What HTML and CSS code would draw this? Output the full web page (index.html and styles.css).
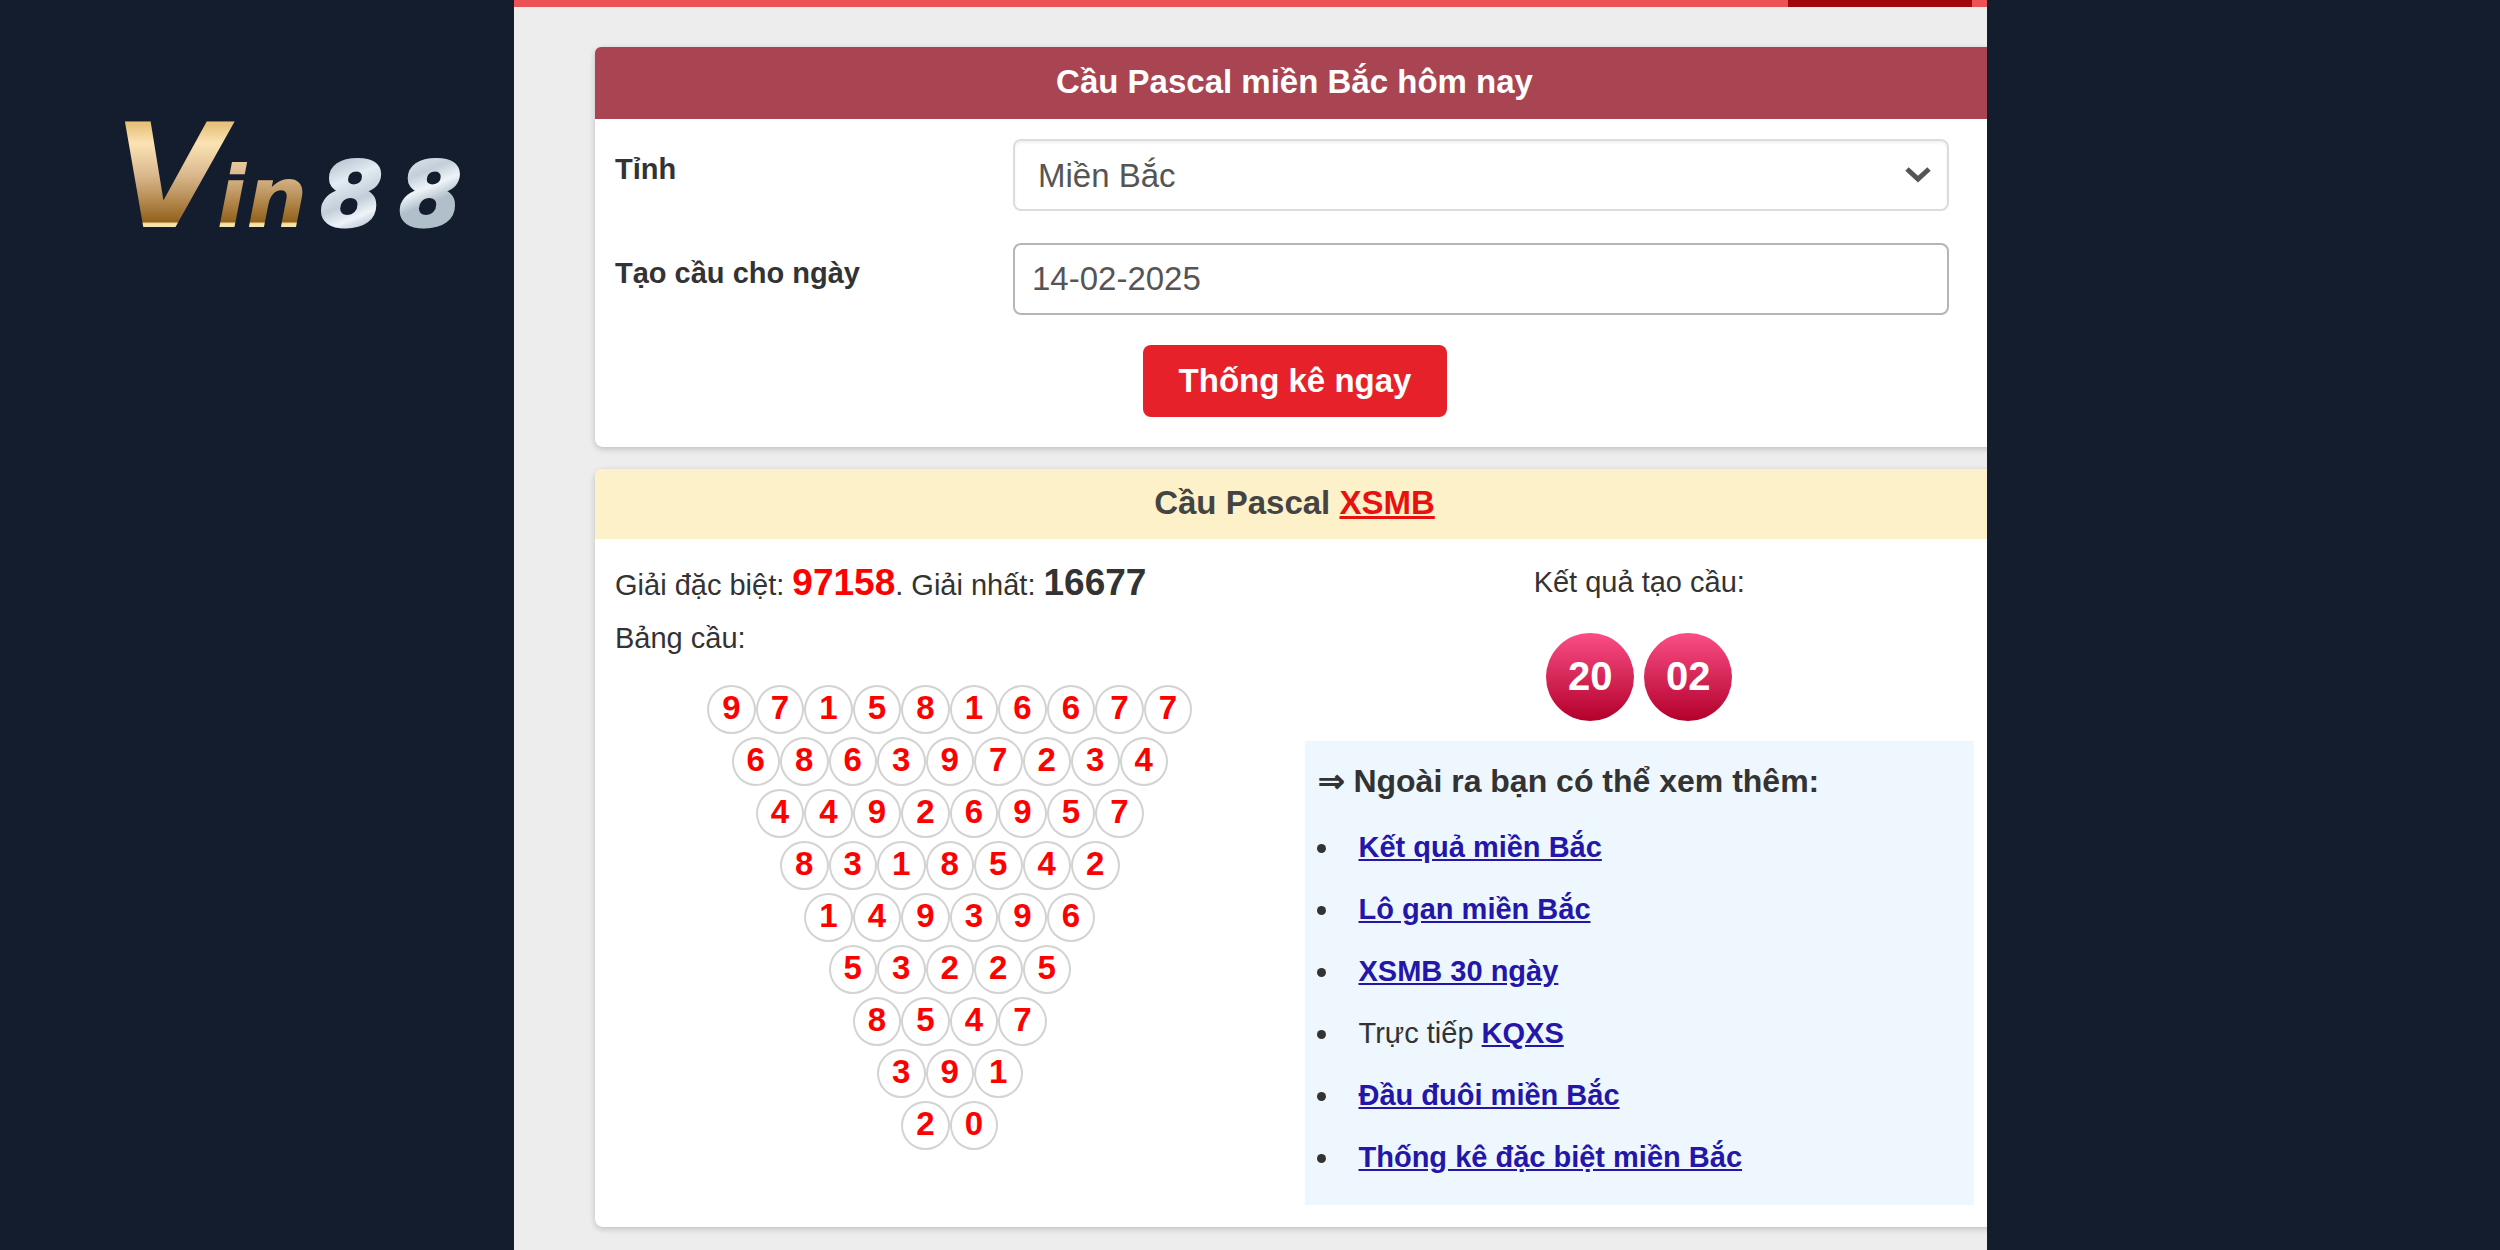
FILE: index.html
```html
<!DOCTYPE html>
<html lang="vi">
<head>
    <meta charset="UTF-8">
    <meta name="viewport" content="width=device-width, initial-scale=1.0">
    <title>Cầu Pascal miền Bắc</title>
    <link rel="stylesheet" href="styles.css">
</head>
<body>
    <div class="page">
        <aside class="sidebar">
            <svg class="logo" viewBox="0 0 356 104" role="img" aria-label="Vin88">
                <defs>
                    <linearGradient id="gold" gradientUnits="userSpaceOnUse" x1="0" y1="0" x2="0" y2="102">
                        <stop offset="0" stop-color="#e8c27c"/>
                        <stop offset="0.18" stop-color="#fbe3b4"/>
                        <stop offset="0.5" stop-color="#d9b78c"/>
                        <stop offset="0.95" stop-color="#93621c"/>
                        <stop offset="0.97" stop-color="#f6e3a8"/>
                    </linearGradient>
                    <linearGradient id="silver" gradientUnits="userSpaceOnUse" x1="200" y1="38" x2="230" y2="110">
                        <stop offset="0" stop-color="#b4c1cd"/>
                        <stop offset="0.3" stop-color="#e3ebf3"/>
                        <stop offset="0.6" stop-color="#c3ced9"/>
                        <stop offset="0.8" stop-color="#eef4f9"/>
                        <stop offset="1" stop-color="#b0bfca"/>
                    </linearGradient>
                </defs>
                <text class="logo-v" x="-11" y="102">V</text>
                <text class="logo-in" x="92" y="102">in</text>
                <text class="logo-num" x="196 275" y="101">88</text>
            </svg>
        </aside>

        <div class="screen">
            <div class="topbar"><span class="topbar-active"></span></div>
            <main class="content">
                <section class="card">
                    <h1 class="card-title">Cầu Pascal miền Bắc hôm nay</h1>
                    <form class="form">
                        <div class="form-row">
                            <label for="province">Tỉnh</label>
                            <div class="select-wrap">
                                <select id="province" class="field field-select">
                                    <option>Miền Bắc</option>
                                </select>
                                <svg class="chevron" viewBox="0 0 26 16" aria-hidden="true">
                                    <path d="M2 2 L13 12 L24 2"/>
                                </svg>
                            </div>
                        </div>
                        <div class="form-row">
                            <label for="date">Tạo cầu cho ngày</label>
                            <input type="text" id="date" class="field" value="14-02-2025">
                        </div>
                        <button type="button" class="submit">Thống kê ngay</button>
                    </form>
                </section>

                <section class="card">
                    <h2 class="card-title card-title-light">Cầu Pascal <a href="#">XSMB</a></h2>
                    <div class="result">
                        <div class="bridge">
                            <p>Giải đặc biệt: <b class="prize special">97158</b>. Giải nhất: <b class="prize">16677</b></p>
                            <p>Bảng cầu:</p>
                            <div class="pascal">
                                <div class="line"><span>9</span><span>7</span><span>1</span><span>5</span><span>8</span><span>1</span><span>6</span><span>6</span><span>7</span><span>7</span></div>
                                <div class="line"><span>6</span><span>8</span><span>6</span><span>3</span><span>9</span><span>7</span><span>2</span><span>3</span><span>4</span></div>
                                <div class="line"><span>4</span><span>4</span><span>9</span><span>2</span><span>6</span><span>9</span><span>5</span><span>7</span></div>
                                <div class="line"><span>8</span><span>3</span><span>1</span><span>8</span><span>5</span><span>4</span><span>2</span></div>
                                <div class="line"><span>1</span><span>4</span><span>9</span><span>3</span><span>9</span><span>6</span></div>
                                <div class="line"><span>5</span><span>3</span><span>2</span><span>2</span><span>5</span></div>
                                <div class="line"><span>8</span><span>5</span><span>4</span><span>7</span></div>
                                <div class="line"><span>3</span><span>9</span><span>1</span></div>
                                <div class="line"><span>2</span><span>0</span></div>
                            </div>
                        </div>
                        <div class="outcome">
                            <p>Kết quả tạo cầu:</p>
                            <div class="balls">
                                <span class="ball">20</span>
                                <span class="ball">02</span>
                            </div>
                            <div class="more">
                                <h3>⇒ Ngoài ra bạn có thể xem thêm:</h3>
                                <ul>
                                    <li><a href="#">Kết quả miền Bắc</a></li>
                                    <li><a href="#">Lô gan miền Bắc</a></li>
                                    <li><a href="#">XSMB 30 ngày</a></li>
                                    <li>Trực tiếp <a href="#">KQXS</a></li>
                                    <li><a href="#">Đầu đuôi miền Bắc</a></li>
                                    <li><a href="#">Thống kê đặc biệt miền Bắc</a></li>
                                </ul>
                            </div>
                        </div>
                    </div>
                </section>
            </main>
        </div>
    </div>
</body>
</html>
```
FILE: styles.css
```css
* {
    box-sizing: border-box;
}
body {
    margin: 0;
    font-family: "Liberation Sans", Arial, sans-serif;
    font-size: 29px;
    line-height: 53px;
    color: #333;
    background-color: #141d2d;
}
h1, h2, h3, p, ul {
    margin: 0;
}
.page {
    display: grid;
    grid-template-columns: 514px 1fr 513px;
    min-height: 100vh;
}

/* logo */
.sidebar {
    padding: 125px 34px 0 125px;
}
.logo {
    display: block;
    width: 100%;
    overflow: visible;
}
.logo text {
    font-family: "DejaVu Sans", sans-serif;
    font-weight: bold;
    font-style: italic;
}
.logo-v {
    font-size: 144px;
    fill: url(#gold);
}
.logo-in {
    font-size: 86px;
    fill: url(#gold);
}
.logo-num {
    font-size: 90px;
    fill: url(#silver);
    stroke: url(#silver);
    stroke-width: 3;
    stroke-linejoin: round;
}

/* main area, runs past the right edge */
.screen {
    overflow: hidden;
    background-color: #ededed;
}
.topbar {
    display: flex;
    justify-content: flex-end;
    height: 7px;
    padding-right: 15px;
    background-color: #eb5256;
}
.topbar-active {
    width: 184px;
    background-color: #9f0708;
}
.content {
    display: flex;
    flex-direction: column;
    gap: 22px;
    margin-right: -7px;
    padding: 40px 0 22px 81px;
}
.card {
    background-color: #fff;
    border-radius: 8px;
    box-shadow: 0 2px 6px rgba(0, 0, 0, 0.2);
}
.card-title {
    padding-bottom: 2px;
    border-radius: 6px 0 0 0;
    background-color: #a94452;
    color: #fff;
    font-size: 33px;
    line-height: 70px;
    text-align: center;
}
.card-title-light {
    background-color: #fdf1c9;
    color: #444;
    line-height: 68px;
}
.card-title a {
    color: #e8110f;
}

/* form */
.form {
    display: flex;
    flex-direction: column;
    gap: 32px;
    padding: 20px 45px 30px 20px;
}
.form-row {
    display: grid;
    grid-template-columns: 398px 1fr;
}
.form-row label {
    font-weight: bold;
    line-height: 60px;
}
.select-wrap {
    position: relative;
}
.field {
    width: 100%;
    height: 72px;
    padding: 0 17px;
    border: 2px solid #b5b5b5;
    border-radius: 8px;
    background-color: #fff;
    color: #555;
    font-family: inherit;
    font-size: 33px;
}
.field-select {
    display: block;
    appearance: none;
    padding: 0 23px;
    border-color: #dcdcdc;
    box-shadow: inset 0 2px 3px rgba(0, 0, 0, 0.06);
}
.chevron {
    position: absolute;
    top: 28px;
    right: 18px;
    width: 26px;
    height: 16px;
    fill: none;
    stroke: #555;
    stroke-width: 5;
    pointer-events: none;
}
.submit {
    align-self: center;
    height: 72px;
    margin: -2px 0 0 26px;
    padding: 0 36px;
    border: 0;
    border-radius: 8px;
    background-color: #e62129;
    color: #fff;
    font-family: inherit;
    font-size: 33px;
    font-weight: bold;
    cursor: pointer;
}

/* result */
.result {
    display: grid;
    grid-template-columns: 1fr 1fr;
    gap: 20px;
    padding: 17px 20px 22px;
}
.prize {
    font-size: 37px;
}
.special {
    color: #f00;
}
.pascal {
    display: flex;
    flex-direction: column;
    gap: 3px;
    width: 485px;
    margin: 20px auto 0;
}
.line {
    display: flex;
    justify-content: center;
}
.line span {
    flex: 0 0 10%;
    height: 49px;
    border: 2px solid #d3d3d3;
    border-radius: 50%;
    color: #f00;
    font-size: 33px;
    font-weight: bold;
    line-height: 42px;
    text-align: center;
}
.outcome {
    text-align: center;
}
.balls {
    display: flex;
    justify-content: center;
    gap: 10px;
    margin: 24px 0 20px;
}
.ball {
    width: 88px;
    height: 88px;
    border-radius: 50%;
    background: linear-gradient(#fa4e86, #b3002b);
    color: #fff;
    font-size: 40px;
    font-weight: bold;
    line-height: 86px;
}
.more {
    padding: 10px 13px 17px;
    background-color: #eef7fe;
    text-align: left;
}
.more h3 {
    margin-bottom: 5px;
    font-size: 32px;
    line-height: 60px;
}
.more ul {
    padding-left: 23px;
}
.more li {
    padding-left: 18px;
    line-height: 62px;
}
.more a {
    color: #2416a8;
    font-weight: bold;
}
```
